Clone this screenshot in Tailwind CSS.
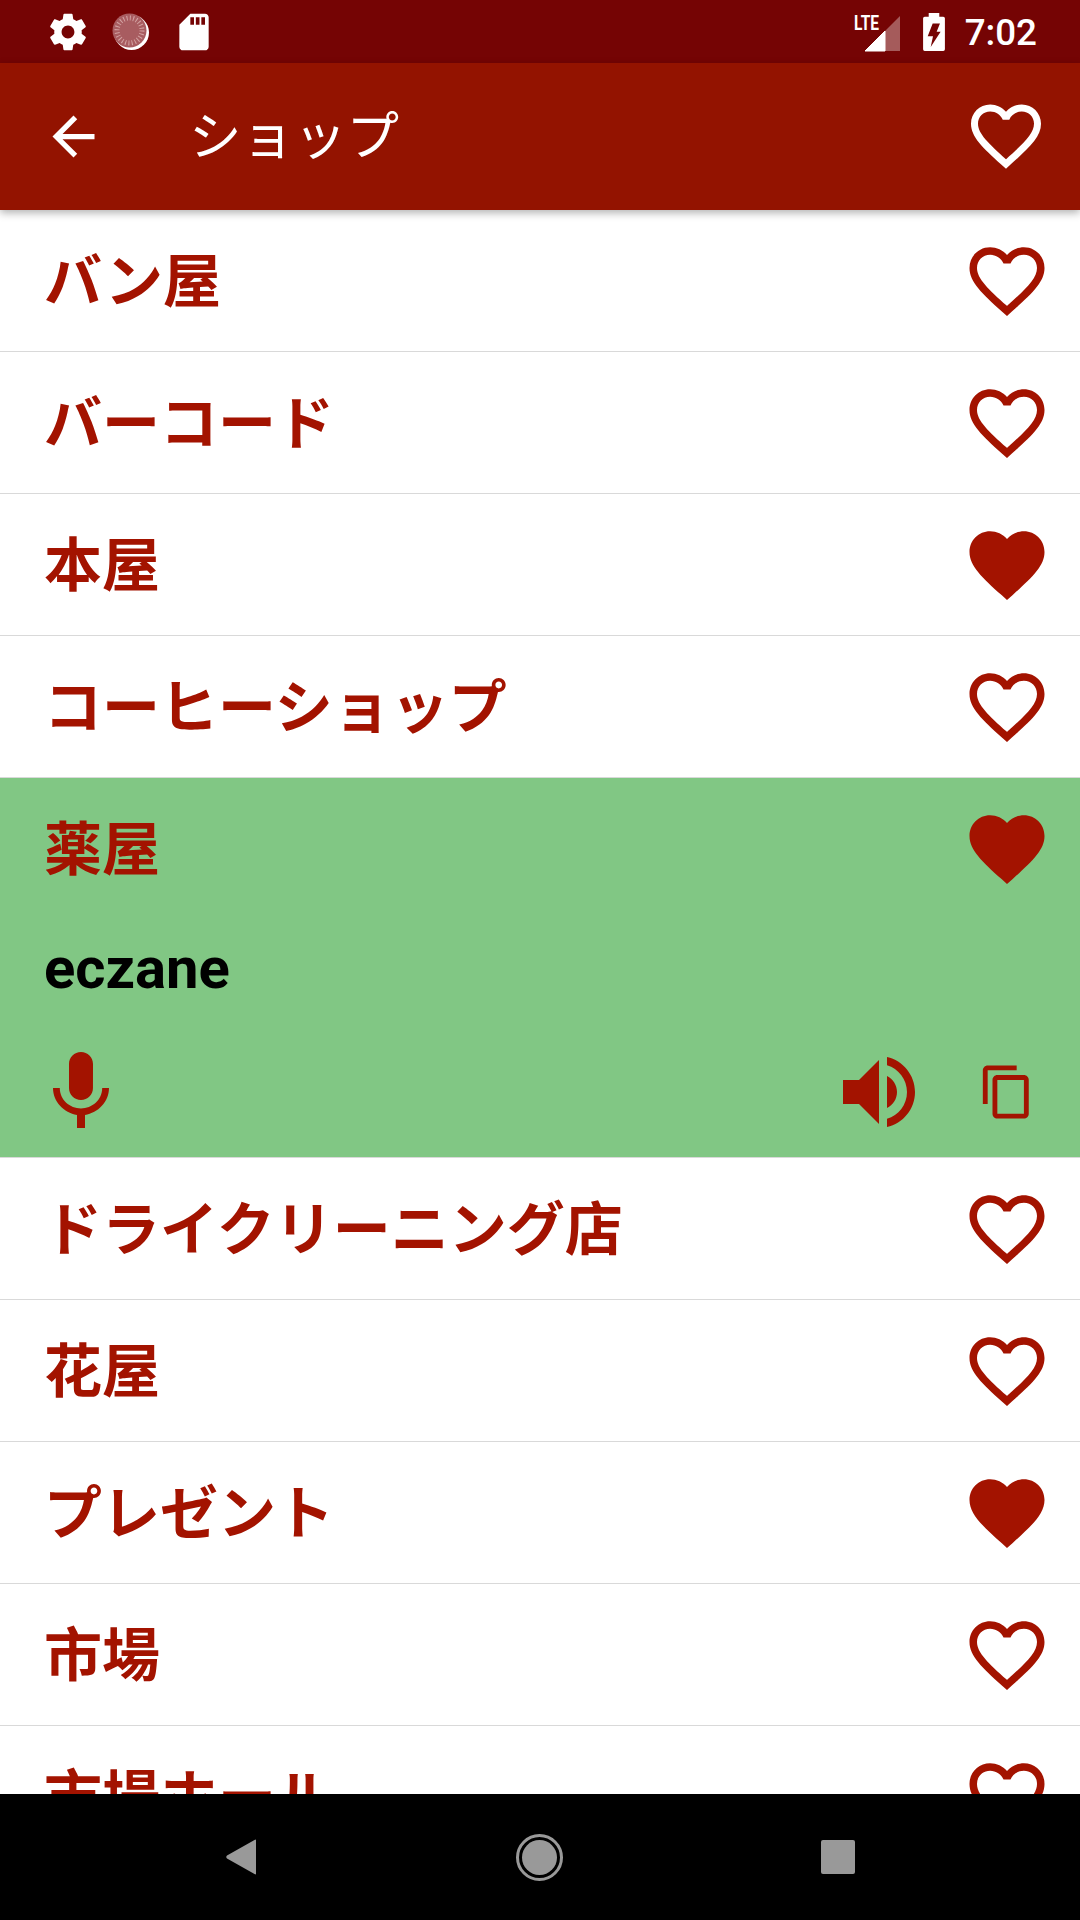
<!DOCTYPE html>
<html>
<head>
<meta charset="utf-8">
<script src="https://cdn.jsdelivr.net/npm/@tailwindcss/browser@4"></script>
</head>
<body class="m-0 bg-white font-['Roboto','Noto_Sans_CJK_SC',sans-serif]">
<div class="relative flex h-[1920px] w-[1080px] flex-col overflow-hidden bg-white">

  <!-- status bar -->
  <header class="flex h-[63px] shrink-0 items-center justify-between bg-[#750404] pl-[46px] pr-[43px] text-white">
    <div class="flex items-center gap-[19px]">
      <svg class="h-[44px] w-[44px]" viewBox="0 0 24 24" fill="#fff"><path d="M19.43 12.98c.04-.32.07-.64.07-.98s-.03-.66-.07-.98l2.11-1.65c.19-.15.24-.42.12-.64l-2-3.46c-.12-.22-.39-.3-.61-.22l-2.49 1c-.52-.4-1.08-.73-1.69-.98l-.38-2.65C14.46 2.18 14.25 2 14 2h-4c-.25 0-.46.18-.49.42l-.38 2.65c-.61.25-1.17.59-1.69.98l-2.49-1c-.23-.09-.49 0-.61.22l-2 3.46c-.13.22-.07.49.12.64l2.11 1.65c-.04.32-.07.65-.07.98s.03.66.07.98l-2.11 1.65c-.19.15-.24.42-.12.64l2 3.46c.12.22.39.3.61.22l2.49-1c.52.4 1.08.73 1.69.98l.38 2.65c.03.24.24.42.49.42h4c.25 0 .46-.18.49-.42l.38-2.65c.61-.25 1.17-.59 1.69-.98l2.49 1c.23.09.49 0 .61-.22l2-3.46c.12-.22.07-.49-.12-.64l-2.11-1.65zM12 15.5c-1.93 0-3.5-1.57-3.5-3.5s1.57-3.5 3.5-3.5 3.5 1.57 3.5 3.5-1.57 3.5-3.5 3.5z"/></svg>
      <svg class="h-[44px] w-[44px]" viewBox="0 0 44 44">
        <circle cx="22.5" cy="22.5" r="17.5" fill="#fff"/>
        <circle cx="20.5" cy="20.5" r="17" fill="#a85c60"/>
        <circle cx="20.5" cy="20.5" r="12.5" fill="none" stroke="#d3a3a3" stroke-width="5" stroke-dasharray="1 2.27"/>
      </svg>
      <svg class="h-[44px] w-[44px]" viewBox="0 0 24 24" fill="#fff"><path d="M18 2h-8L4.02 8 4 20c0 1.1.9 2 2 2h12c1.1 0 2-.9 2-2V4c0-1.1-.9-2-2-2zm-6 6h-2V4h2v4zm3 0h-2V4h2v4zm3 0h-2V4h2v4z"/></svg>
    </div>
    <div class="flex items-center">
      <svg class="h-[44px] w-[48px]" viewBox="0 0 48 44">
        <text x="0" y="20" textLength="25" lengthAdjust="spacingAndGlyphs" fill="#fff" font-family="Roboto" font-weight="700" font-size="20">LTE</text>
        <polygon points="11,41 31,41 31,21" fill="#fff" stroke="#fff" stroke-width="1" stroke-linejoin="round"/>
        <polygon points="31,21 46,6 46,41 31,41" fill="#fff" fill-opacity=".35"/>
      </svg>
      <svg class="ml-[21px] h-[38px] w-[22px]" viewBox="249 35 66 115" fill="#fff"><path fill-rule="evenodd" d="M266 35h32v11h12q5 0 5 5v94q0 5-5 5h-56q-5 0-5-5v-94q0-5 5-5h12zM278 67L300 67L290 92L302 92L272 138L279 105L263 105Z"/></svg>
      <span class="ml-[20px] pt-[3px] text-[36.75px] font-medium leading-none">7:02</span>
    </div>
  </header>

  <!-- app bar -->
  <div class="relative z-10 flex h-[147px] shrink-0 items-center bg-[#931300] pl-[42px] pr-[32px] shadow-[0_3px_8px_rgba(0,0,0,0.3)]">
    <svg class="h-[63px] w-[63px]" viewBox="0 0 24 24" fill="#fff"><path d="M20 11H7.83l5.59-5.59L12 4l-8 8 8 8 1.41-1.41L7.83 13H20v-2z"/></svg>
    <h1 class="ml-[84px] flex-1 pt-[2px] text-[52.5px] font-normal leading-none text-white">ショップ</h1>
    <svg class="mb-[2px] h-[84px] w-[84px]" viewBox="0 0 24 24" fill="#fff"><path d="M16.5 3c-1.74 0-3.41.81-4.5 2.09C10.91 3.81 9.24 3 7.5 3 4.42 3 2 5.42 2 8.5c0 3.78 3.4 6.86 8.55 11.54L12 21.35l1.45-1.32C18.6 15.36 22 12.28 22 8.5 22 5.42 19.58 3 16.5 3zm-4.4 15.55l-.1.1-.1-.1C7.14 14.24 4 11.39 4 8.5 4 6.5 5.5 5 7.5 5c1.54 0 3.04.99 3.57 2.36h1.87C13.46 5.99 14.96 5 16.5 5c2 0 3.5 1.5 3.5 3.5 0 2.89-3.14 5.74-7.9 10.05z"/></svg>
  </div>

  <!-- list -->
  <main class="min-h-0 flex-1 overflow-hidden text-[58px] font-bold leading-none text-[#a31300]">
    <div class="flex h-[142px] items-center justify-between border-b border-[#d9d9d9] pl-[44px] pr-[28px] pt-px"><span class="pt-[2px]">バン屋</span><svg class="h-[90px] w-[90px]" viewBox="0 0 24 24" fill="#a31300"><path d="M16.5 3c-1.74 0-3.41.81-4.5 2.09C10.91 3.81 9.24 3 7.5 3 4.42 3 2 5.42 2 8.5c0 3.78 3.4 6.86 8.55 11.54L12 21.35l1.45-1.32C18.6 15.36 22 12.28 22 8.5 22 5.42 19.58 3 16.5 3zm-4.4 15.55l-.1.1-.1-.1C7.14 14.24 4 11.39 4 8.5 4 6.5 5.5 5 7.5 5c1.54 0 3.04.99 3.57 2.36h1.87C13.46 5.99 14.96 5 16.5 5c2 0 3.5 1.5 3.5 3.5 0 2.89-3.14 5.74-7.9 10.05z"/></svg></div>
    <div class="flex h-[142px] items-center justify-between border-b border-[#d9d9d9] pl-[44px] pr-[28px] pt-px"><span class="pt-[2px]">バーコード</span><svg class="h-[90px] w-[90px]" viewBox="0 0 24 24" fill="#a31300"><path d="M16.5 3c-1.74 0-3.41.81-4.5 2.09C10.91 3.81 9.24 3 7.5 3 4.42 3 2 5.42 2 8.5c0 3.78 3.4 6.86 8.55 11.54L12 21.35l1.45-1.32C18.6 15.36 22 12.28 22 8.5 22 5.42 19.58 3 16.5 3zm-4.4 15.55l-.1.1-.1-.1C7.14 14.24 4 11.39 4 8.5 4 6.5 5.5 5 7.5 5c1.54 0 3.04.99 3.57 2.36h1.87C13.46 5.99 14.96 5 16.5 5c2 0 3.5 1.5 3.5 3.5 0 2.89-3.14 5.74-7.9 10.05z"/></svg></div>
    <div class="flex h-[142px] items-center justify-between border-b border-[#d9d9d9] pl-[44px] pr-[28px] pt-px"><span class="pt-[2px]">本屋</span><svg class="h-[90px] w-[90px]" viewBox="0 0 24 24" fill="#a31300"><path d="M12 21.35l-1.45-1.32C5.4 15.36 2 12.28 2 8.5 2 5.42 4.42 3 7.5 3c1.74 0 3.41.81 4.5 2.09C13.09 3.81 14.76 3 16.5 3 19.58 3 22 5.42 22 8.5c0 3.78-3.4 6.86-8.55 11.54L12 21.35z"/></svg></div>
    <div class="flex h-[142px] items-center justify-between border-b border-[#d9d9d9] pl-[44px] pr-[28px] pt-px"><span class="pt-[2px]">コーヒーショップ</span><svg class="h-[90px] w-[90px]" viewBox="0 0 24 24" fill="#a31300"><path d="M16.5 3c-1.74 0-3.41.81-4.5 2.09C10.91 3.81 9.24 3 7.5 3 4.42 3 2 5.42 2 8.5c0 3.78 3.4 6.86 8.55 11.54L12 21.35l1.45-1.32C18.6 15.36 22 12.28 22 8.5 22 5.42 19.58 3 16.5 3zm-4.4 15.55l-.1.1-.1-.1C7.14 14.24 4 11.39 4 8.5 4 6.5 5.5 5 7.5 5c1.54 0 3.04.99 3.57 2.36h1.87C13.46 5.99 14.96 5 16.5 5c2 0 3.5 1.5 3.5 3.5 0 2.89-3.14 5.74-7.9 10.05z"/></svg></div>

    <!-- expanded row -->
    <section class="h-[380px] border-b border-[#d9d9d9] bg-[#81c784]">
      <div class="flex h-[142px] items-center justify-between pl-[44px] pr-[28px]"><span class="pt-[2px]">薬屋</span><svg class="h-[90px] w-[90px]" viewBox="0 0 24 24" fill="#a31300"><path d="M12 21.35l-1.45-1.32C5.4 15.36 2 12.28 2 8.5 2 5.42 4.42 3 7.5 3c1.74 0 3.41.81 4.5 2.09C13.09 3.81 14.76 3 16.5 3 19.58 3 22 5.42 22 8.5c0 3.78-3.4 6.86-8.55 11.54L12 21.35z"/></svg></div>
      <div class="flex h-[96px] items-center pl-[44px] text-black">eczane</div>
      <div class="mt-[28px] flex h-[96px] items-center pl-[33px] pr-[44px]">
        <svg class="h-[96px] w-[96px]" viewBox="0 0 24 24" fill="#a31300"><path d="M12 14c1.66 0 2.99-1.34 2.99-3L15 5c0-1.66-1.34-3-3-3S9 3.34 9 5v6c0 1.66 1.34 3 3 3zm5.3-3c0 3-2.54 5.1-5.3 5.1S6.7 14 6.7 11H5c0 3.41 2.72 6.23 6 6.72V21h2v-3.28c3.28-.48 6-3.3 6-6.72h-1.7z"/></svg>
        <svg class="ml-auto h-[96px] w-[96px]" viewBox="0 0 24 24" fill="#a31300"><path d="M3 9v6h4l5 5V4L7 9H3zm13.5 3c0-1.77-1.02-3.29-2.5-4.03v8.05c1.48-.73 2.5-2.25 2.5-4.02zM14 3.23v2.06c2.89.86 5 3.54 5 6.71s-2.11 5.85-5 6.71v2.06c4.01-.91 7-4.49 7-8.77s-2.99-7.86-7-8.77z"/></svg>
        <svg class="ml-[51px] h-[58px] w-[58px]" viewBox="0 0 24 24" fill="#a31300"><path d="M16 1H4c-1.1 0-2 .9-2 2v14h2V3h12V1zm3 4H8c-1.1 0-2 .9-2 2v14c0 1.1.9 2 2 2h11c1.1 0 2-.9 2-2V7c0-1.1-.9-2-2-2zm0 16H8V7h11v14z"/></svg>
      </div>
    </section>

    <div class="flex h-[142px] items-center justify-between border-b border-[#d9d9d9] pl-[44px] pr-[28px] pt-px"><span class="pt-[2px]">ドライクリーニング店</span><svg class="h-[90px] w-[90px]" viewBox="0 0 24 24" fill="#a31300"><path d="M16.5 3c-1.74 0-3.41.81-4.5 2.09C10.91 3.81 9.24 3 7.5 3 4.42 3 2 5.42 2 8.5c0 3.78 3.4 6.86 8.55 11.54L12 21.35l1.45-1.32C18.6 15.36 22 12.28 22 8.5 22 5.42 19.58 3 16.5 3zm-4.4 15.55l-.1.1-.1-.1C7.14 14.24 4 11.39 4 8.5 4 6.5 5.5 5 7.5 5c1.54 0 3.04.99 3.57 2.36h1.87C13.46 5.99 14.96 5 16.5 5c2 0 3.5 1.5 3.5 3.5 0 2.89-3.14 5.74-7.9 10.05z"/></svg></div>
    <div class="flex h-[142px] items-center justify-between border-b border-[#d9d9d9] pl-[44px] pr-[28px] pt-px"><span class="pt-[2px]">花屋</span><svg class="h-[90px] w-[90px]" viewBox="0 0 24 24" fill="#a31300"><path d="M16.5 3c-1.74 0-3.41.81-4.5 2.09C10.91 3.81 9.24 3 7.5 3 4.42 3 2 5.42 2 8.5c0 3.78 3.4 6.86 8.55 11.54L12 21.35l1.45-1.32C18.6 15.36 22 12.28 22 8.5 22 5.42 19.58 3 16.5 3zm-4.4 15.55l-.1.1-.1-.1C7.14 14.24 4 11.39 4 8.5 4 6.5 5.5 5 7.5 5c1.54 0 3.04.99 3.57 2.36h1.87C13.46 5.99 14.96 5 16.5 5c2 0 3.5 1.5 3.5 3.5 0 2.89-3.14 5.74-7.9 10.05z"/></svg></div>
    <div class="flex h-[142px] items-center justify-between border-b border-[#d9d9d9] pl-[44px] pr-[28px] pt-px"><span class="pt-[2px]">プレゼント</span><svg class="h-[90px] w-[90px]" viewBox="0 0 24 24" fill="#a31300"><path d="M12 21.35l-1.45-1.32C5.4 15.36 2 12.28 2 8.5 2 5.42 4.42 3 7.5 3c1.74 0 3.41.81 4.5 2.09C13.09 3.81 14.76 3 16.5 3 19.58 3 22 5.42 22 8.5c0 3.78-3.4 6.86-8.55 11.54L12 21.35z"/></svg></div>
    <div class="flex h-[142px] items-center justify-between border-b border-[#d9d9d9] pl-[44px] pr-[28px] pt-px"><span class="pt-[2px]">市場</span><svg class="h-[90px] w-[90px]" viewBox="0 0 24 24" fill="#a31300"><path d="M16.5 3c-1.74 0-3.41.81-4.5 2.09C10.91 3.81 9.24 3 7.5 3 4.42 3 2 5.42 2 8.5c0 3.78 3.4 6.86 8.55 11.54L12 21.35l1.45-1.32C18.6 15.36 22 12.28 22 8.5 22 5.42 19.58 3 16.5 3zm-4.4 15.55l-.1.1-.1-.1C7.14 14.24 4 11.39 4 8.5 4 6.5 5.5 5 7.5 5c1.54 0 3.04.99 3.57 2.36h1.87C13.46 5.99 14.96 5 16.5 5c2 0 3.5 1.5 3.5 3.5 0 2.89-3.14 5.74-7.9 10.05z"/></svg></div>
    <div class="flex h-[142px] items-center justify-between border-b border-[#d9d9d9] pl-[44px] pr-[28px] pt-px"><span class="pt-[2px]">市場ホール</span><svg class="h-[90px] w-[90px]" viewBox="0 0 24 24" fill="#a31300"><path d="M16.5 3c-1.74 0-3.41.81-4.5 2.09C10.91 3.81 9.24 3 7.5 3 4.42 3 2 5.42 2 8.5c0 3.78 3.4 6.86 8.55 11.54L12 21.35l1.45-1.32C18.6 15.36 22 12.28 22 8.5 22 5.42 19.58 3 16.5 3zm-4.4 15.55l-.1.1-.1-.1C7.14 14.24 4 11.39 4 8.5 4 6.5 5.5 5 7.5 5c1.54 0 3.04.99 3.57 2.36h1.87C13.46 5.99 14.96 5 16.5 5c2 0 3.5 1.5 3.5 3.5 0 2.89-3.14 5.74-7.9 10.05z"/></svg></div>
  </main>

  <!-- navigation bar -->
  <nav class="relative flex h-[126px] shrink-0 items-center bg-black pl-[226px] pr-[225px]">
    <svg class="h-[36px] w-[31px]" viewBox="0 0 31 36" fill="#999"><path d="M30 1.5 L30 34.5 Q30 36 28.5 35 L1 19.5 Q-0.5 18 1 16.5 L28.5 1 Q30 0 30 1.5Z"/></svg>
    <div class="ml-auto flex h-[47px] w-[47px] items-center justify-center rounded-full border-[3px] border-[#999]"><div class="h-[35px] w-[35px] shrink-0 rounded-full bg-[#999]"></div></div>
    <div class="ml-auto h-[34px] w-[34px] rounded-[2px] bg-[#999]"></div>
  </nav>
</div>
</body>
</html>
